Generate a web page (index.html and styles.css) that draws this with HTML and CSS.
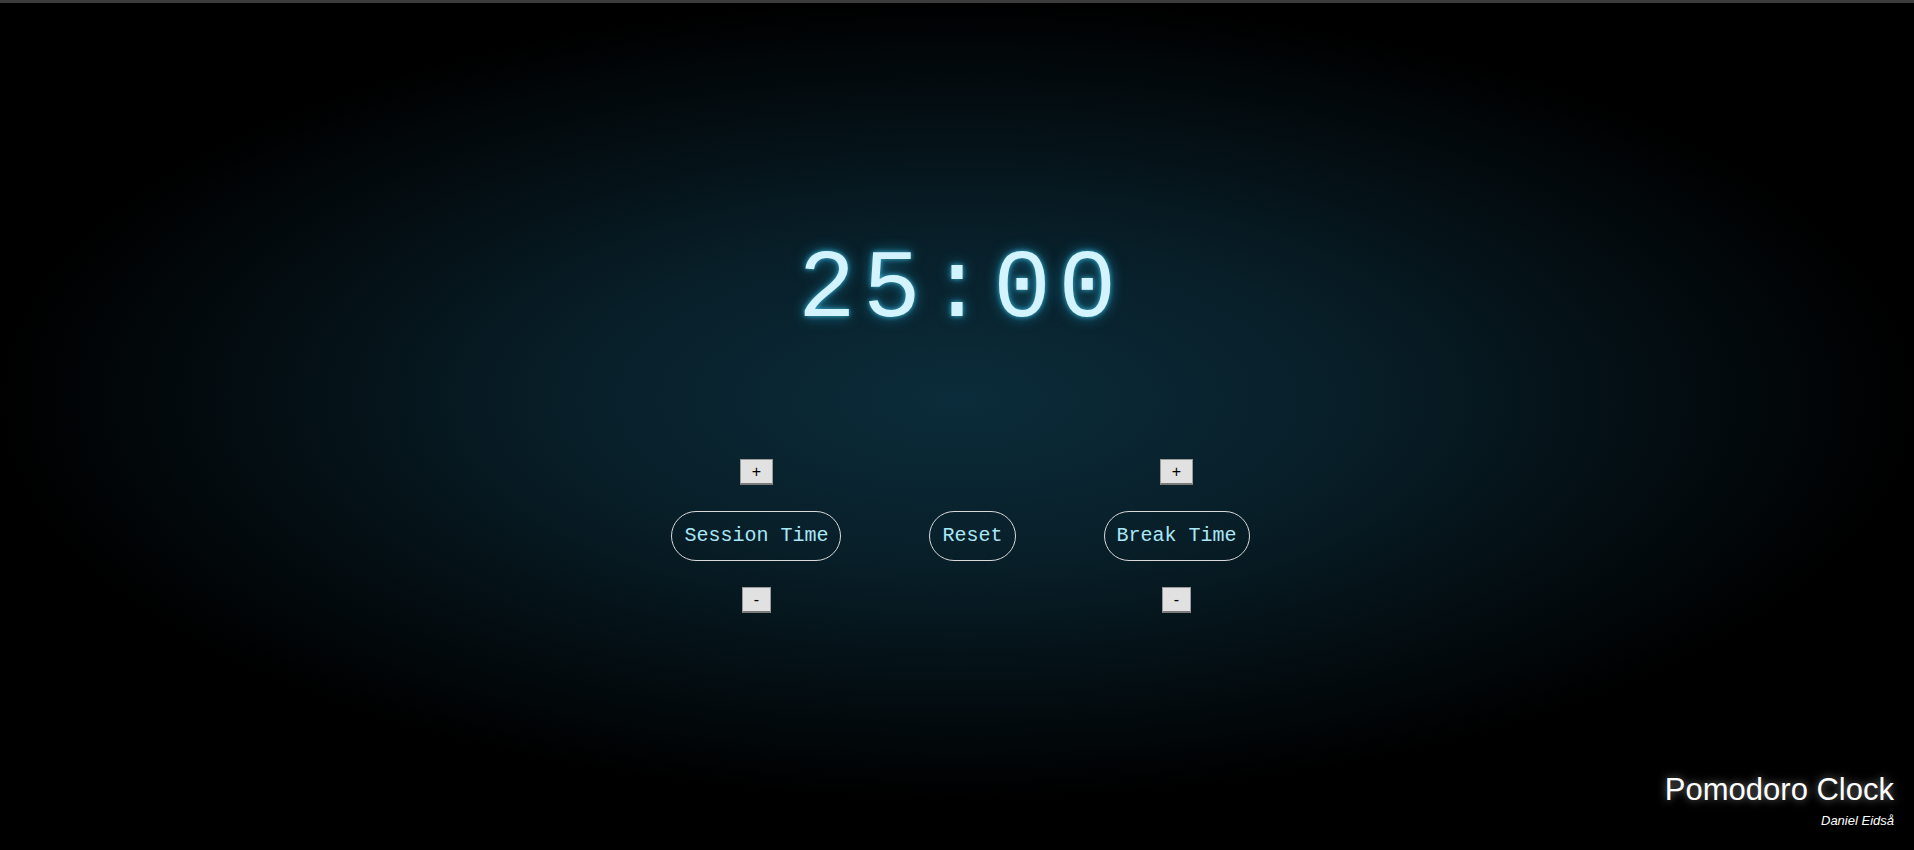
FILE: index.html
```html
<!DOCTYPE html>
<html>
<head>
<meta charset="utf-8">
<title>Pomodoro Clock</title>
<link rel="stylesheet" href="styles.css">
</head>
<body>
<main class="app">
  <div class="clock">25:00</div>
  <div class="controls">
    <div class="col">
      <button class="adj">+</button>
      <button class="pill">Session Time</button>
      <button class="adj">-</button>
    </div>
    <div class="col">
      <button class="pill">Reset</button>
    </div>
    <div class="col">
      <button class="adj">+</button>
      <button class="pill">Break Time</button>
      <button class="adj">-</button>
    </div>
  </div>
  <footer class="footer">
    <h1 class="title">Pomodoro Clock</h1>
    <p class="author">Daniel Eidså</p>
  </footer>
</main>
</body>
</html>
```
FILE: styles.css
```css
html, body {
  margin: 0;
  padding: 0;
}
body {
  height: 850px;
  box-sizing: border-box;
  border-top: 3px solid #3c3c3c;
  background: radial-gradient(ellipse closest-side at 50% 47%, #0b2c3a 0%, #081f29 40%, #000 100%);
  background-color: #000;
  overflow: hidden;
}
.app {
  height: 100%;
  display: flex;
  flex-direction: column;
}
.clock {
  margin-top: 240px;
  font-family: "Liberation Mono", "Courier New", monospace;
  font-size: 96px;
  line-height: 96px;
  letter-spacing: 7.5px;
  text-indent: 7.5px;
  text-align: center;
  color: #d3f4ff;
  text-shadow: 0 0 5px rgba(70, 200, 240, 0.8), 0 0 14px rgba(29, 143, 181, 0.8);
}
.controls {
  margin-top: 120px;
  display: flex;
  justify-content: center;
  align-items: center;
  gap: 88px;
  padding-left: 7px;
}
.col {
  display: flex;
  flex-direction: column;
  align-items: center;
  gap: 26px;
}
.adj {
  font-family: "Liberation Sans", Arial, sans-serif;
  font-size: 16px;
  line-height: 19px;
  padding: 2px 11px;
  color: #000;
  background: #e1e1e1;
  border: 1px solid #9a9a9a;
  border-bottom: 2px solid #7a7a7a;
  border-radius: 0;
}
.pill {
  font-family: "Liberation Mono", "Courier New", monospace;
  font-size: 20px;
  line-height: 22px;
  padding: 13px 12px;
  color: #a9e7f7;
  background: transparent;
  border: 1px solid #d9d9d9;
  border-radius: 25px;
}
.footer {
  margin-top: auto;
  align-self: flex-end;
  padding: 0 20px 22px 0;
  text-align: right;
  font-family: "Liberation Sans", Arial, sans-serif;
  color: #fff;
}
.title {
  margin: 0;
  font-size: 31px;
  line-height: 36px;
  font-weight: normal;
  text-shadow: 0 0 8px rgba(255,255,255,0.5);
}
.author {
  margin: 6px 0 0;
  font-size: 13px;
  line-height: 14px;
  font-style: italic;
}
```
